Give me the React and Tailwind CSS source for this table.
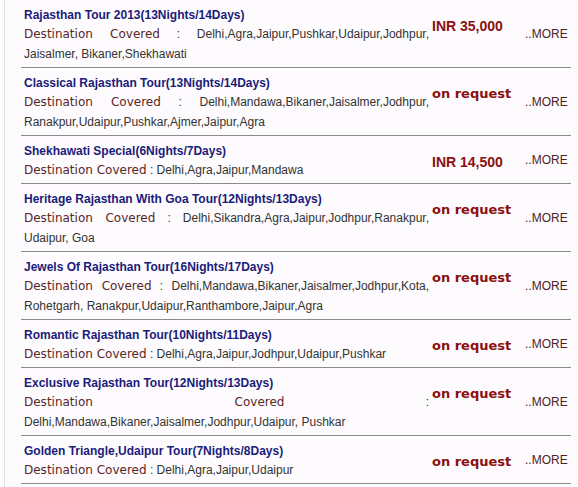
import React from 'react';

const tours = [
  { title: "Rajasthan Tour 2013(13Nights/14Days)", places: "Delhi,Agra,Jaipur,Pushkar,Udaipur,Jodhpur, Jaisalmer, Bikaner,Shekhawati", price: "INR 35,000" },
  { title: "Classical Rajasthan Tour(13Nights/14Days)", places: "Delhi,Mandawa,Bikaner,Jaisalmer,Jodhpur, Ranakpur,Udaipur,Pushkar,Ajmer,Jaipur,Agra", price: "on request" },
  { title: "Shekhawati Special(6Nights/7Days)", places: "Delhi,Agra,Jaipur,Mandawa", price: "INR 14,500" },
  { title: "Heritage Rajasthan With Goa Tour(12Nights/13Days)", places: "Delhi,Sikandra,Agra,Jaipur,Jodhpur,Ranakpur, Udaipur, Goa", price: "on request" },
  { title: "Jewels Of Rajasthan Tour(16Nights/17Days)", places: "Delhi,Mandawa,Bikaner,Jaisalmer,Jodhpur,Kota, Rohetgarh, Ranakpur,Udaipur,Ranthambore,Jaipur,Agra", price: "on request" },
  { title: "Romantic Rajasthan Tour(10Nights/11Days)", places: "Delhi,Agra,Jaipur,Jodhpur,Udaipur,Pushkar", price: "on request" },
  { title: "Exclusive Rajasthan Tour(12Nights/13Days)", places: "Delhi,Mandawa,Bikaner,Jaisalmer,Jodhpur,Udaipur, Pushkar", price: "on request" },
  { title: "Golden Triangle,Udaipur Tour(7Nights/8Days)", places: "Delhi,Agra,Jaipur,Udaipur", price: "on request" }
];

const App = () => {
  return (
    <div className="w-[578px] h-[487px] bg-[#fdfbfd] overflow-hidden">
      <div className="ml-[4px] h-full border-l border-[#e0e0e0] pl-[16px] pr-[7px]">
        {tours.map((tour, idx) => (
          <div key={idx} className="flex border-b border-[#8a8a8a]">
            <div className="w-[408px] pl-[3px] pt-[6px] pb-[3px]">
              <div className="font-['Liberation_Sans',Arial,sans-serif] font-bold text-[12px] leading-[18px] text-[#1b1b7a]">
                {tour.title}
              </div>
              <p className="text-justify text-[12px] leading-[20px] text-[#333] font-['Liberation_Sans',Arial,sans-serif]">
                <span className="font-['DejaVu_Sans',Verdana,sans-serif] text-[#5a2626]">Destination Covered</span> : {tour.places}
              </p>
            </div>
            <div className="w-[96px] pl-[3px] pt-[18px]">
              {tour.price.startsWith("INR") ? (
                <div className="font-['Liberation_Sans',Arial,sans-serif] font-bold text-[14px] leading-[16px] text-[#8b1010]">{tour.price}</div>
              ) : (
                <div className="font-['DejaVu_Sans',Verdana,sans-serif] font-bold text-[13px] leading-[16px] text-[#8b1010]">{tour.price}</div>
              )}
            </div>
            <div className="flex-1 flex items-center font-['Liberation_Sans',Arial,sans-serif] text-[12px] text-[#4d2424]">
              ..MORE
            </div>
          </div>
        ))}
      </div>
    </div>
  );
};

export default App;
